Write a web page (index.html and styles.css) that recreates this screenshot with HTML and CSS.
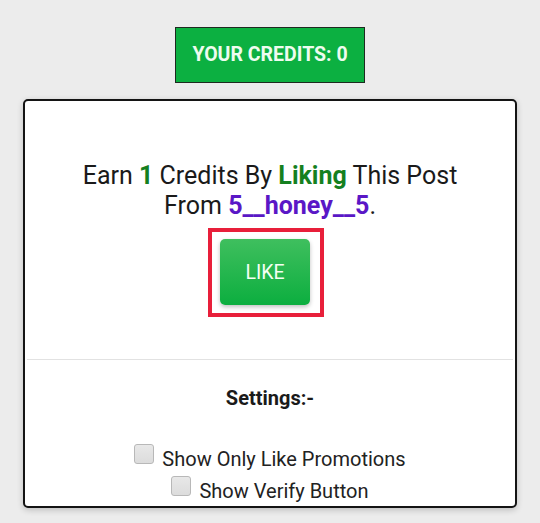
FILE: index.html
```html
<!DOCTYPE html>
<html lang="en">
<head>
  <meta charset="UTF-8">
  <meta name="viewport" content="width=device-width, initial-scale=1.0">
  <title>Earn Credits</title>
  <link rel="stylesheet" href="styles.css">
</head>
<body>
  <div id="creditsBar">
    <div id="credits">YOUR CREDITS: 0</div>
  </div>

  <div id="card">
    <!-- post to like -->
    <div id="postArea">
      <p class="earnText">
        Earn <span class="green">1</span> Credits By <span class="green">Liking</span> This Post<br>
        From <span class="user">5__honey__5</span>.
      </p>
      <div id="likeFrame">
        <button id="likeBtn">LIKE</button>
      </div>
    </div>

    <!-- settings -->
    <div id="settings">
      <div class="settingsTitle">Settings:-</div>
      <label class="option"><input type="checkbox"> Show Only Like Promotions</label>
      <label class="option"><input type="checkbox"> Show Verify Button</label>
    </div>
  </div>
</body>
</html>
```

FILE: styles.css
```css
* {
  margin: 0;
  padding: 0;
  box-sizing: border-box;
  font-family: Roboto, 'Noto Sans', sans-serif;
}

body {
  background: #ececec;
  color: #1a1a1a;
  min-height: 100vh;
}

#creditsBar {
  text-align: center;
  padding-top: 27px;
}

#credits {
  display: inline-block;
  background-color: #0cb041;
  border: 1px solid #1e2a20;
  color: #eefcef;
  font-size: 19.5px;
  font-weight: bold;
  height: 56px;
  line-height: 54px;
  padding: 0 16px;
}

#card {
  margin: 16px 23px 0;
  height: 409px;
  background: #fff;
  border: 2px solid #141414;
  border-radius: 5px;
  box-shadow: 0 2px 6px rgba(0, 0, 0, 0.2);
  overflow: hidden;
}

#postArea {
  text-align: center;
  padding-top: 60px;
  padding-bottom: 42px;
  border-bottom: 1px solid #e2e2e2;
  margin: 0 2px;
}

.earnText {
  font-size: 25px;
  line-height: 30px;
  color: #1a1a1a;
}

.green {
  color: #15801f;
  font-weight: bold;
}

.user {
  color: #5a17c6;
  font-weight: bold;
}

#likeFrame {
  display: inline-block;
  margin-top: 7px;
  margin-right: 8px;
  border: 4px solid #e81f3a;
  padding: 7px 10px 8px 8px;
}

#likeBtn {
  display: block;
  width: 90px;
  height: 66px;
  border: none;
  border-radius: 5px;
  background: linear-gradient(#3fbf5e, #0cae3f);
  color: #f4fff4;
  font-size: 19.5px;
  box-shadow: 0 2px 4px rgba(0, 0, 0, 0.25);
  cursor: pointer;
}

#settings {
  text-align: center;
  padding-top: 25px;
}

.settingsTitle {
  font-size: 20px;
  font-weight: bold;
  line-height: 26px;
  margin-bottom: 32px;
}

.option {
  display: block;
  font-size: 20px;
  line-height: 32px;
  color: #222;
}

.option input {
  appearance: none;
  -webkit-appearance: none;
  display: inline-block;
  width: 20px;
  height: 20px;
  background: linear-gradient(#e8e8e8, #dcdcdc);
  border: 1px solid #b8b8b8;
  border-radius: 3px;
  vertical-align: 2px;
  margin-right: 3px;
}
```
